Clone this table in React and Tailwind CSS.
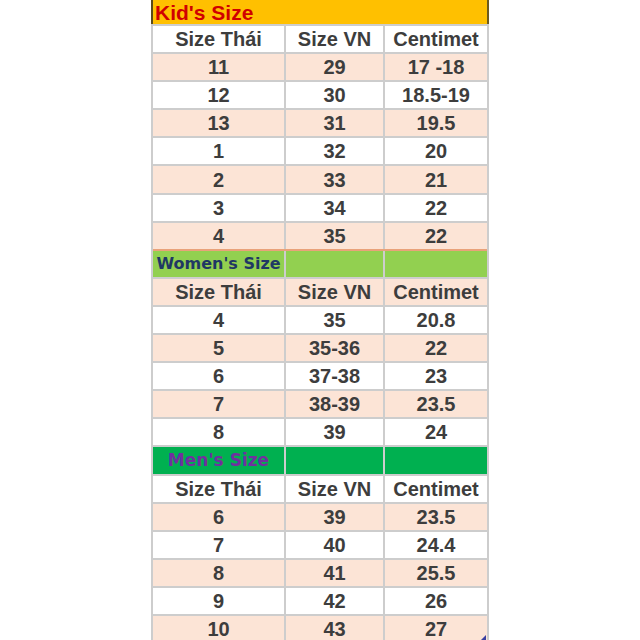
import React from 'react';

const PEACH = 'bg-[#fce4d6]';
const WHITE = 'bg-white';

const Row = ({ cells, bg, bottom = 'border-[#cdcdcd]', last = false }) => (
    <div className={`flex h-[28.1px] border-b-2 ${bottom} ${bg}`}>
        <div className="w-[133px] flex items-center justify-center border-r-2 border-[#cdcdcd]">{cells[0]}</div>
        <div className="w-[99px] flex items-center justify-center border-r-2 border-[#cdcdcd]">{cells[1]}</div>
        <div className="relative w-[102px] flex items-center justify-center">
            {cells[2]}
            {last && (
                <svg className="absolute right-[1px] bottom-[1px]" width="6" height="6" viewBox="0 0 6 6">
                    <polygon points="6,0 6,6 0,6" fill="#3a3fa0" />
                </svg>
            )}
        </div>
    </div>
);

const Head = ({ bg }) => <Row bg={bg} cells={['Size Thái', 'Size VN', 'Centimet']} />;

const GroupRow = ({ label, bg, color, size }) => (
    <div className="flex h-[28.1px] border-b-2 border-[#cdcdcd]">
        <div className={`w-[133px] flex items-center justify-center border-r-2 border-[#cdcdcd] ${bg}`}>
            <span className={`${size} ${color}`} style={{ fontFamily: '"DejaVu Sans", Verdana, sans-serif' }}>{label}</span>
        </div>
        <div className={`w-[99px] border-r-2 border-[#cdcdcd] ${bg}`} />
        <div className={`w-[102px] ${bg}`} />
    </div>
);

const kids = [
    ['11', '29', '17 -18'],
    ['12', '30', '18.5-19'],
    ['13', '31', '19.5'],
    ['1', '32', '20'],
    ['2', '33', '21'],
    ['3', '34', '22'],
    ['4', '35', '22'],
];

const women = [
    ['4', '35', '20.8'],
    ['5', '35-36', '22'],
    ['6', '37-38', '23'],
    ['7', '38-39', '23.5'],
    ['8', '39', '24'],
];

const men = [
    ['6', '39', '23.5'],
    ['7', '40', '24.4'],
    ['8', '41', '25.5'],
    ['9', '42', '26'],
    ['10', '43', '27'],
];

export default function App() {
    return (
        <div className="w-[640px] h-[640px] overflow-hidden bg-white">
            <div
                className="ml-[151px] w-[338px] font-bold text-[20px] leading-none text-[#3d3d3d]"
                style={{ fontFamily: '"Liberation Sans", Arial, sans-serif' }}
            >
                <div className="h-[24px] bg-[#ffc000] border-l-2 border-r-2 border-l-[#5a4a1a] border-r-[#6b5a20] flex items-center pl-[2px]">
                    <span className="text-[#d00000] text-[21px]">Kid's Size</span>
                </div>
                <div className="border-l-2 border-r-2 border-t-2 border-[#cdcdcd]">
                    <Head bg={WHITE} />
                    {kids.map((r, i) => (
                        <Row
                            key={'k' + i}
                            cells={r}
                            bg={i % 2 === 0 ? PEACH : WHITE}
                            bottom={i === kids.length - 1 ? 'border-[#e9a27a]' : 'border-[#cdcdcd]'}
                        />
                    ))}
                    <GroupRow label="Women's Size" bg="bg-[#92d050]" color="text-[#1f3864]" size="text-[16px]" />
                    <Head bg={PEACH} />
                    {women.map((r, i) => (
                        <Row key={'w' + i} cells={r} bg={i % 2 === 0 ? WHITE : PEACH} />
                    ))}
                    <GroupRow label="Men's Size" bg="bg-[#00b050]" color="text-[#7030a0]" size="text-[17px]" />
                    <Head bg={WHITE} />
                    {men.map((r, i) => (
                        <Row key={'m' + i} cells={r} bg={i % 2 === 0 ? PEACH : WHITE} last={i === men.length - 1} />
                    ))}
                </div>
            </div>
        </div>
    );
}
